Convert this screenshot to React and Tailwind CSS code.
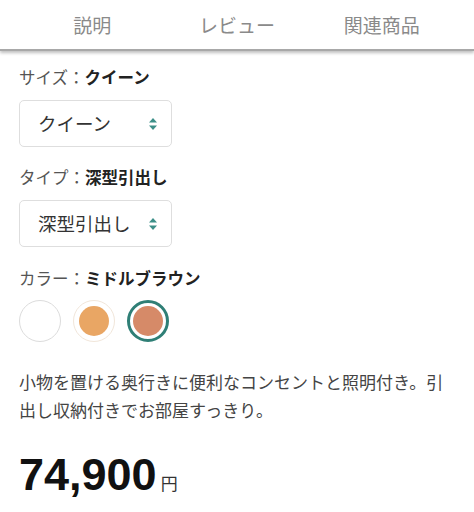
import React, { useState } from 'react';

const tabs = ['説明', 'レビュー', '関連商品'];

const colors = [
  { name: 'ホワイト', fill: 'bg-white', ring: 'border-[#dcdcdc]' },
  { name: 'ナチュラル', fill: 'bg-[#e9a664]', ring: 'border-[#f1e6da]' },
  { name: 'ミドルブラウン', fill: 'bg-[#d68a68]', ring: 'border-[#2f7f76]' },
];

function Arrows() {
  return (
    <svg width="10" height="14" viewBox="0 0 10 14" className="text-[#3c8f88]">
      <path d="M5 1 L9 5.5 H1 Z" fill="currentColor" />
      <path d="M5 13 L9 8.5 H1 Z" fill="currentColor" />
    </svg>
  );
}

function Picker({ label, value }) {
  return (
    <div>
      <p className="text-[16.5px] leading-[20px] text-[#555]">
        {label}：<span className="font-bold text-[#222]">{value}</span>
      </p>
      <div className="mt-[13px] w-[153px] h-[47px] rounded-[5px] border border-[#dedede] flex items-center pl-[18px] pr-[13px] justify-between">
        <span className="text-[18.5px] text-[#333]">{value}</span>
        <Arrows />
      </div>
    </div>
  );
}

export default function App() {
  const [color, setColor] = useState(2);

  return (
    <div
      className="w-[474px] h-[512px] bg-white overflow-hidden"
      style={{ fontFamily: '"Noto Sans CJK JP", "Noto Sans", sans-serif' }}
    >
      {/* tab bar */}
      <div className="h-[51px] flex px-5 border-b-[2px] border-[#a8a8a8] shadow-[0_2px_3px_rgba(0,0,0,0.25)]">
        {tabs.map((t) => (
          <div key={t} className="flex-1 flex items-center justify-center text-[19px] text-[#8a8a8a] pt-[1px]">
            {t}
          </div>
        ))}
      </div>

      <div className="px-[19px] pt-[16px]">
        <Picker label="サイズ" value="クイーン" />
        <div className="mt-[20px]">
          <Picker label="タイプ" value="深型引出し" />
        </div>

        <p className="mt-[21px] text-[16.5px] leading-[20px] text-[#555]">
          カラー：<span className="font-bold text-[#222]">{colors[color].name}</span>
        </p>
        <div className="mt-[12px] flex gap-[12px]">
          {colors.map((c, i) => (
            <button
              key={c.name}
              onClick={() => setColor(i)}
              className={`w-[42px] h-[42px] rounded-full flex items-center justify-center bg-white ${
                i === color ? 'border-[3px] border-[#2f7f76]' : `border ${c.ring}`
              }`}
            >
              {i > 0 && <span className={`w-[30px] h-[30px] rounded-full ${c.fill}`} />}
            </button>
          ))}
        </div>

        <p className="mt-[26px] max-w-[436px] text-[17px] leading-[28px] text-[#444]">
          小物を置ける奥行きに便利なコンセントと照明付き。引出し収納付きでお部屋すっきり。
        </p>

        <div className="mt-[28px] flex items-baseline text-[#111]">
          <span className="text-[45px] font-bold leading-none" style={{ fontFamily: '"Liberation Sans", Arial, sans-serif' }}>
            74,900
          </span>
          <span className="ml-[4px] text-[17px] text-[#333]">円</span>
        </div>
      </div>
    </div>
  );
}
